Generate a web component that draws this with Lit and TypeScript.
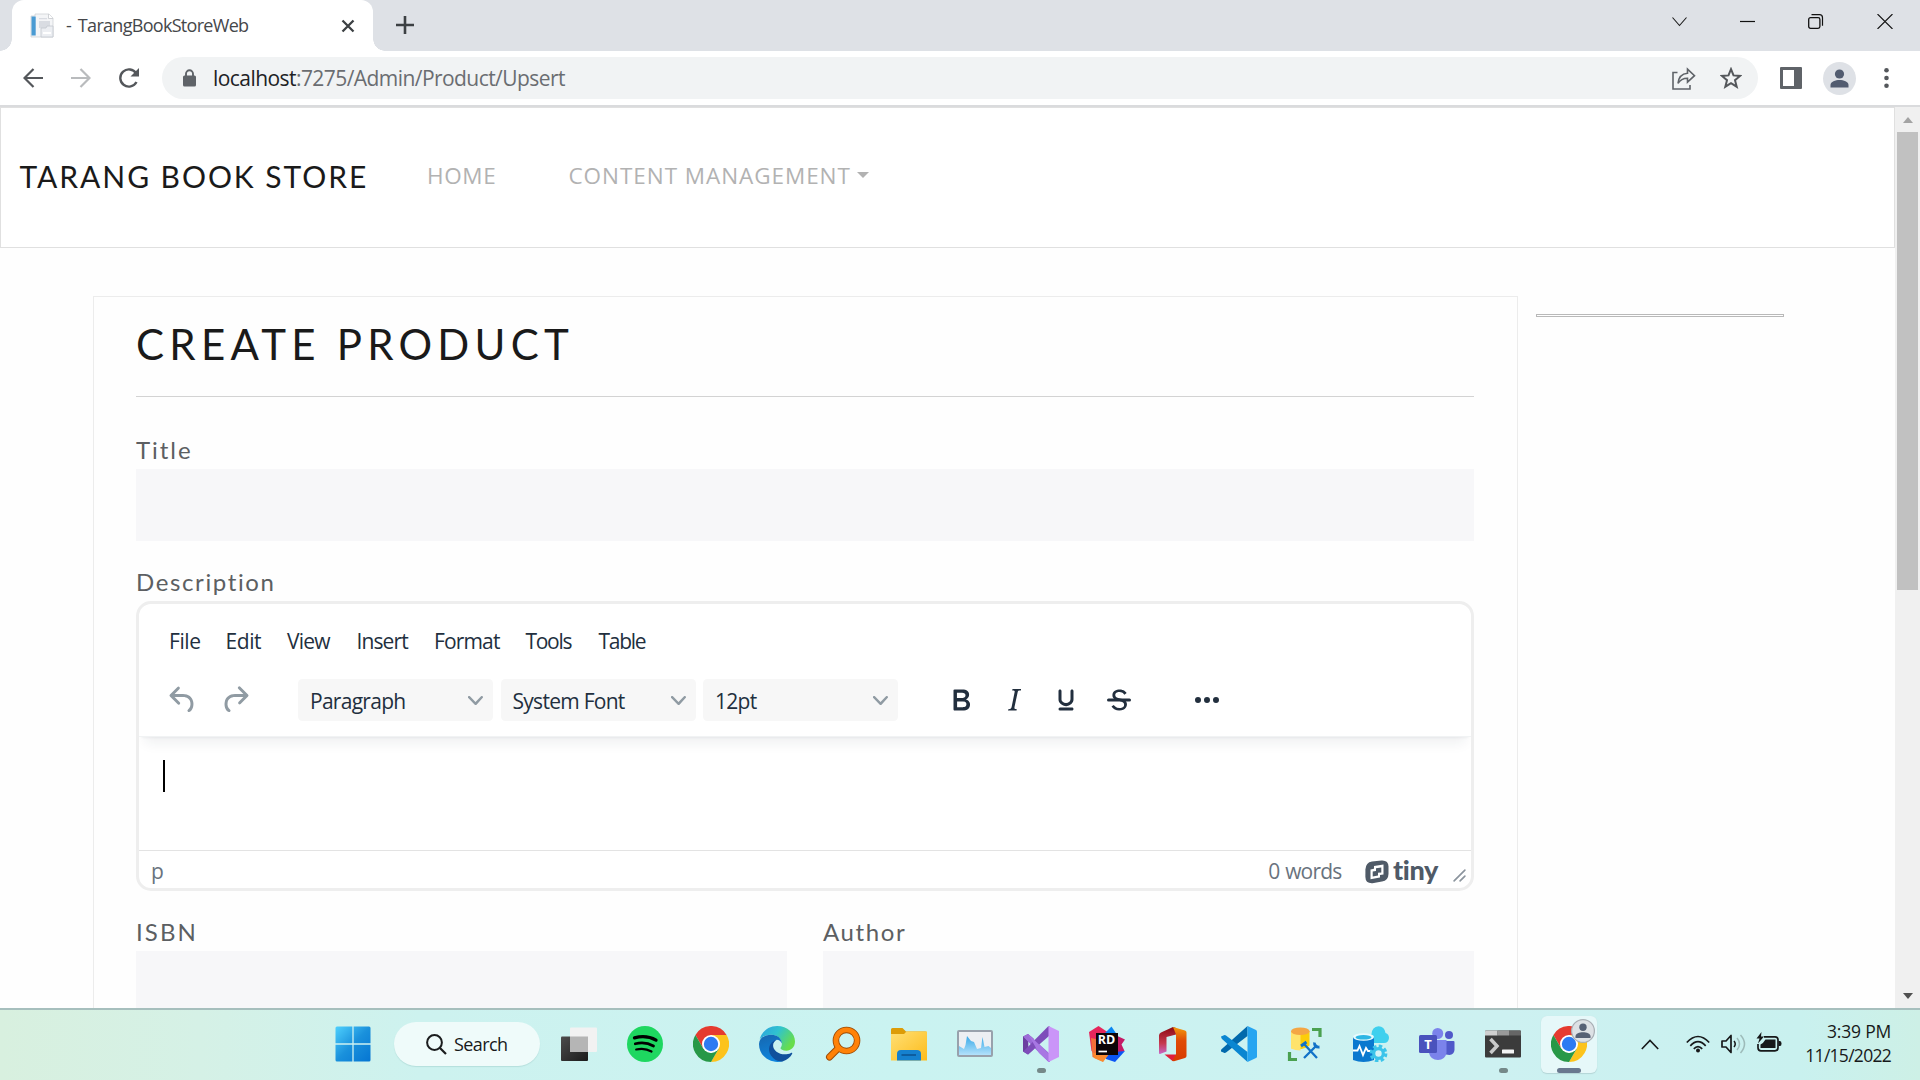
import { LitElement, html, svg, css } from "lit";
import { customElement } from "lit/decorators.js";

interface MenuEntry {
  label: string;
  spacing: number;
}

const MENU: MenuEntry[] = [
  { label: "File", spacing: -0.4 },
  { label: "Edit", spacing: -0.4 },
  { label: "View", spacing: -0.8 },
  { label: "Insert", spacing: -0.9 },
  { label: "Format", spacing: -0.85 },
  { label: "Tools", spacing: -1.3 },
  { label: "Table", spacing: -1.3 },
];

const SELECTS = ["Paragraph", "System Font", "12pt"];

const UNDO = "M6.4 8H12c3.7 0 6.2 2 6.8 5.1.6 2.7-.4 5.6-2.3 6.8a1 1 0 0 1-1-1.8c1.1-.6 1.8-2.7 1.4-4.6-.5-2.1-2.1-3.5-4.9-3.5H6.4l3.3 3.3a1 1 0 1 1-1.4 1.4l-5-5a1 1 0 0 1 0-1.4l5-5a1 1 0 0 1 1.4 1.4L6.4 8Z";
const REDO = "M17.6 10H12c-2.8 0-4.4 1.4-4.9 3.5-.4 2 .3 4 1.4 4.6a1 1 0 1 1-1 1.8c-2-1.2-2.9-4.1-2.3-6.8.6-3 3-5.1 6.8-5.1h5.6l-3.3-3.3a1 1 0 1 1 1.4-1.4l5 5a1 1 0 0 1 0 1.4l-5 5a1 1 0 0 1-1.4-1.4l3.3-3.3Z";
const BOLD = "M7.8 19c-.3 0-.5 0-.6-.2l-.2-.5V5.7c0-.2 0-.4.2-.5l.6-.2h5c1.5 0 2.7.3 3.5 1 .7.6 1.1 1.4 1.1 2.5a3 3 0 0 1-.6 1.9c-.4.6-1 1-1.6 1.2.4.1.9.3 1.3.6s.8.7 1 1.2c.4.4.5 1 .5 1.6 0 1.3-.4 2.3-1.3 3-.8.7-2.1 1-3.8 1H7.8Zm5-8.3c.6 0 1.2-.1 1.6-.5.4-.3.6-.7.6-1.3 0-1.1-.8-1.7-2.3-1.7H9.3v3.5h3.4Zm.5 6c.7 0 1.3-.1 1.7-.4.4-.4.6-.9.6-1.5s-.2-1-.7-1.4c-.4-.3-1-.4-2-.4H9.4v3.8h4Z";
const ITALIC = "m16.7 4.7-.1.9h-.3c-.6 0-1 0-1.4.3-.3.3-.4.6-.5 1.1l-2.1 9.8v.6c0 .5.4.8 1.4.8h.2l-.2.8H8l.2-.8h.2c1.1 0 1.8-.5 2-1.5l2-9.8.1-.5c0-.6-.4-.8-1.4-.8h-.3l.2-.9h5.8Z";
const UNDERLINE = "M16 5c.6 0 1 .4 1 1v5.5a4 4 0 0 1-.4 1.8l-1 1.4a5.3 5.3 0 0 1-5.5 1 5 5 0 0 1-1.6-1c-.5-.4-.8-.9-1.1-1.4a4 4 0 0 1-.4-1.8V6c0-.6.4-1 1-1s1 .4 1 1v5.5c0 .3 0 .6.2 1l.6.7a3.3 3.3 0 0 0 2.2.8 3.4 3.4 0 0 0 2.2-.8c.3-.2.4-.5.6-.8l.2-.9V6c0-.6.4-1 1-1ZM8 17h8c.6 0 1 .4 1 1s-.4 1-1 1H8a1 1 0 0 1 0-2Z";
const STRIKE = "M15.6 8.5c-.5-.7-1-1.1-1.3-1.3-.6-.4-1.3-.6-2-.6-2.7 0-2.8 1.7-2.8 2.1 0 1.6 1.8 2 3.2 2.3 4.4.9 4.6 2.8 4.6 3.9 0 1.4-.7 4.1-5 4.1A6.2 6.2 0 0 1 7 16.4l1.5-1.1c.4.6 1.6 2 3.7 2 1.6 0 2.5-.4 3-1.2.4-.8.3-2-.8-2.6-.7-.4-1.6-.7-2.9-1-1-.2-3.9-.8-3.9-3.6C7.6 6 10.3 5 12.4 5c2.9 0 4.2 1.6 4.7 2.4l-1.5 1.1Z";
const STRIKE_BAR = "M5 11h14a1 1 0 0 1 0 2H5a1 1 0 0 1 0-2Z";
const MORE = "M6 10a2 2 0 1 0 0 4 2 2 0 0 0 0-4Zm6 0a2 2 0 1 0 0 4 2 2 0 0 0 0-4Zm6 0a2 2 0 1 0 0 4 2 2 0 0 0 0-4Z";

/* ---------- browser window ---------- */

@customElement("browser-tabs")
class BrowserTabs extends LitElement {
  static styles = css`
    :host { display: flex; height: 51px; background: #dee1e6; font-family: "Open Sans", sans-serif; }
    svg { display: block; flex: none; }
    .tab {
      position: relative; display: flex; align-items: center; width: 361px; height: 51px; box-sizing: border-box;
      margin-left: 12px; padding-left: 18px; background: #fff; border-radius: 12px 12px 0 0;
    }
    .tab::before, .tab::after {
      content: ""; position: absolute; bottom: 0; width: 12px; height: 12px;
    }
    .tab::before { left: -12px; background: radial-gradient(circle at 0 0, transparent 11.5px, #fff 12px); }
    .tab::after { right: -12px; background: radial-gradient(circle at 100% 0, transparent 11.5px, #fff 12px); }
    .title { flex: 1; margin: -1px 0 0 12px; font-size: 18px; line-height: 50px; letter-spacing: -0.7px; word-spacing: 2.8px; color: #45474a; white-space: pre; }
    .close { margin-right: 18px; }
    .plus { margin: 16px 0 0 23px; }
    .controls { display: flex; margin: 14px 27px 0 auto; gap: 53px; }
  `;
  render() {
    return html`
      <div class="tab">
        <svg width="24" height="25" viewBox="0 0 24 25">
          <path d="M5 1h14l4 4v19H1V3h4Z" fill="#f4f5f7" stroke="#cfd2d6" stroke-width=".8" />
          <rect x="1.5" y="3.5" width="4.2" height="19" fill="#4a9bd3" />
          <path d="M9 5h8v1.2H9zM9 8h11v7H9z" fill="#d9dce2" />
          <path d="M18.5 1v4.5H23" fill="#fff" stroke="#c5c8cd" stroke-width=".8" />
          <path d="M11 15h5l1-2h6v11H11z" fill="#eceef2" stroke="#c3c6ce" stroke-width=".8" />
          <path d="M13 19h8v2h-8z" fill="#fff" />
        </svg>
        <span class="title">- TarangBookStoreWeb</span>
        <svg class="close" width="14" height="14" viewBox="0 0 14 14"><path d="M1.5 1.5l11 11M12.500 1.500l-11 11" stroke="#3c4043" stroke-width="2.300" /></svg>
      </div>
      <svg class="plus" width="18" height="18" viewBox="0 0 18 18"><path d="M9 0v18M0 9h18" stroke="#3c4043" stroke-width="2.600" /></svg>
      <div class="controls">
        <svg width="15" height="15" viewBox="0 0 15 15"><path d="M.5 3.500l7 8 7-8" fill="none" stroke="#1b1b1b" stroke-width="1.100" /></svg>
        <svg width="15" height="15" viewBox="0 0 15 15"><path d="M0 7.500h15" stroke="#111" stroke-width="1.200" /></svg>
        <svg width="16" height="15" viewBox="0 0 16 15"><rect x=".7" y="3.700" width="11.200" height="10.600" rx="1.800" fill="none" stroke="#111" stroke-width="1.300" /><path d="M3.500 .7h8q3 0 3 3v8" fill="none" stroke="#111" stroke-width="1.200" /></svg>
        <svg width="16" height="15" viewBox="0 0 16 15"><path d="M.5 0l15 15M15.500 0l-15 15" stroke="#111" stroke-width="1.100" /></svg>
      </div>
    `;
  }
}

@customElement("address-row")
class AddressRow extends LitElement {
  static styles = css`
    :host {
      display: flex; align-items: center; box-sizing: border-box; height: 56px; padding: 0 31px 0 23px;
      background: #fff; border-bottom: 2px solid #dadbdd; font-family: "Open Sans", sans-serif;
    }
    svg { display: block; flex: none; }
    .forward { margin-left: 28px; }
    .reload { margin-left: 27px; }
    .bar {
      display: flex; align-items: center; flex: 1; height: 42px; box-sizing: border-box;
      margin-left: 22px; padding: 0 16px 0 21px; border-radius: 21px; background: #f1f3f4;
    }
    .url { flex: 1; margin-left: 17px; font-size: 21px; line-height: 42px; letter-spacing: -0.56px; color: #6a6d71; }
    .host { color: #202124; }
    .star { margin-left: 24px; }
    .panel { margin-left: 22px; }
    .avatar { margin-left: 21px; }
    .dots { margin-left: 28px; }
  `;
  render() {
    return html`
      <svg width="20" height="20" viewBox="0 0 20 20"><path d="M20 10H2M10.500 1L1.500 10l9 9" fill="none" stroke="#54575b" stroke-width="2.200" /></svg>
      <svg class="forward" width="20" height="20" viewBox="0 0 20 20"><path d="M0 10h18M9.500 1l9 9-9 9" fill="none" stroke="#b9bbbd" stroke-width="2.200" /></svg>
      <svg class="reload" width="22" height="22" viewBox="0 0 22 22"><path d="M18.500 15a8.600 8.600 0 1 1-.3-8.500" fill="none" stroke="#54575b" stroke-width="2.400" /><path d="M21 1v8.500h-8.500Z" fill="#54575b" /></svg>
      <div class="bar">
        <svg width="13" height="18" viewBox="0 0 13 18"><rect y="6.500" width="13" height="11" rx="1.500" fill="#5f6368" /><path d="M3 7.500V4.800a3.500 3.500 0 0 1 7 0v2.700" fill="none" stroke="#5f6368" stroke-width="1.900" /></svg>
        <span class="url"><span class="host">localhost</span>:7275/Admin/Product/Upsert</span>
        <svg width="24" height="23" viewBox="0 0 24 23"><path d="M5.500 5.500H1v16.500h17v-4" fill="none" stroke="#5f6368" stroke-width="1.600" /><path d="M15.500 2.200l7 6.500-7 6.500v-4c-4.800 0-7.500 1.700-9.500 5.200C6.500 11 9.500 6.700 15.500 6.200Z" fill="none" stroke="#5f6368" stroke-width="1.600" /></svg>
        <svg class="star" width="22" height="22" viewBox="0 0 22 22"><path d="M11 2.200l2.500 6.200 6.600.5-5.100 4.300 1.700 6.500L11 16.100l-5.700 3.600L7 13.200 1.900 8.900l6.600-.5Z" fill="none" stroke="#54575b" stroke-width="2" /></svg>
      </div>
      <svg class="panel" width="22" height="22" viewBox="0 0 22 22"><rect width="22" height="22" rx="1" fill="#5f6368" /><rect x="3" y="3" width="11" height="16" fill="#fff" /></svg>
      <svg class="avatar" width="33" height="33" viewBox="0 0 33 33"><circle cx="16.500" cy="16.500" r="16.500" fill="#dee1e6" /><circle cx="16.500" cy="12" r="4.600" fill="#525c70" /><path d="M7.500 25.500v-2.500c0-3.300 5-5 9-5s9 1.700 9 5v2.500Z" fill="#525c70" /></svg>
      <svg class="dots" width="5" height="22" viewBox="0 0 5 22"><g fill="#54575b"><circle cx="2.500" cy="3.300" r="2.300" /><circle cx="2.500" cy="11" r="2.300" /><circle cx="2.500" cy="18.700" r="2.300" /></g></svg>
    `;
  }
}

/* ---------- site ---------- */

@customElement("site-nav")
class SiteNav extends LitElement {
  static styles = css`
    :host {
      display: flex; align-items: center; box-sizing: border-box; height: 141px; padding: 0 0 3px 18.500px;
      border: 1px solid #e0e0e0; background: #fff; font-family: Lato, sans-serif; white-space: nowrap;
    }
    .brand { width: 407.500px; padding-bottom: 1px; font-size: 30px; line-height: 40px; letter-spacing: 1.940px; color: #1a1a1a; }
    .link { font: 22.500px/40px "Open Sans", sans-serif; letter-spacing: 0.950px; color: #b2b2b2; }
    .home { width: 141.500px; letter-spacing: 0.600px; }
    .caret { margin: -2px 0 0 6.500px; border: 6px solid transparent; border-top-color: #b2b2b2; border-bottom: 0; }
  `;
  render() {
    return html`
      <span class="brand">TARANG BOOK STORE</span>
      <span class="link home">HOME</span>
      <span class="link">CONTENT MANAGEMENT</span>
      <span class="caret"></span>
    `;
  }
}

@customElement("rich-editor")
class RichEditor extends LitElement {
  static styles = css`
    :host {
      display: flex; flex-direction: column; box-sizing: border-box; height: 290px; overflow: hidden;
      border: 3px solid #eee; border-radius: 15px; background: #fff;
      font: 21px "Open Sans", sans-serif; color: #222f3e;
    }
    svg { display: block; flex: none; }
    .header {
      box-sizing: border-box; height: 133px; padding-top: 13px; border-bottom: 1px solid #f1f3f4;
      box-shadow: 0 3px 3px -3px rgba(34, 47, 62, 0.1), 0 12px 12px -6px rgba(34, 47, 62, 0.07);
    }
    .menu {
      display: grid; grid-template-columns: 56.500px 61.500px 69.500px 77.500px 91.500px 73px 60px;
      padding: 1px 0 0 30px; line-height: 46px;
    }
    .tools { display: flex; align-items: center; height: 72px; padding-left: 26px; }
    .muted { fill: #909ba3; }
    .redo { margin-left: 15.500px; }
    .select {
      display: flex; align-items: center; justify-content: space-between; box-sizing: border-box;
      width: 195px; height: 42px; margin-right: 7.500px; padding: 0 10px 0 12px; border-radius: 4.500px;
      background: #f7f7f7; letter-spacing: -0.720px; line-height: 42px;
    }
    .select span { padding-top: 2px; }
    .selects { display: flex; margin-left: 45.500px; }
    .bold { margin-left: 37px; }
    .italic { margin-left: 17.500px; }
    .underline { margin-left: 15.500px; }
    .strike { margin-left: 17.500px; }
    .more { margin-left: 52px; }
    .ink { fill: #222f3e; }
    .body { flex: 1; padding: 23px 0 0 24px; }
    .cursor { width: 2px; height: 32px; background: #000; }
    .status {
      display: flex; box-sizing: border-box; height: 38px; padding: 0 4px 0 12px; border-top: 1px solid #e3e3e3;
      line-height: 41px; color: #69737e;
    }
    .words { margin-left: auto; letter-spacing: -0.800px; word-spacing: 1px; }
    .logo { margin: 9px 0 0 23.500px; }
    .tiny { width: 59px; margin-left: 4px; font: 900 27px/38px Lato, sans-serif; letter-spacing: -0.400px; color: #4f5a67; }
    .resize { margin-top: 17px; }
  `;
  private tool(name: string, ...paths: string[]) {
    return html`<svg class=${name} width="36" height="36" viewBox="0 0 24 24">${paths.map((d) => svg`<path fill-rule="evenodd" d=${d} />`)}</svg>`;
  }
  render() {
    return html`
      <div class="header">
        <div class="menu">
          ${MENU.map((m) => html`<span style="letter-spacing:${m.spacing}px">${m.label}</span>`)}
        </div>
        <div class="tools">
          ${this.tool("muted", UNDO)} ${this.tool("muted redo", REDO)}
          <div class="selects">
            ${SELECTS.map(
              (s) => html`<div class="select">
                <span>${s}</span>
                <svg width="15" height="15" viewBox="0 0 10 10"><path class="muted" d="M8.700 2.200c.3-.3.8-.3 1 0 .4.4.4.9 0 1.200L5.700 7.800c-.3.3-.9.3-1.200 0L.2 3.400a.8.8 0 0 1 0-1.200c.3-.3.8-.3 1.100 0L5 6l3.700-3.800Z" /></svg>
              </div>`
            )}
          </div>
          ${this.tool("ink bold", BOLD)} ${this.tool("ink italic", ITALIC)} ${this.tool("ink underline", UNDERLINE)}
          ${this.tool("ink strike", STRIKE, STRIKE_BAR)} ${this.tool("ink more", MORE)}
        </div>
      </div>
      <div class="body"><div class="cursor"></div></div>
      <div class="status">
        <span>p</span>
        <span class="words">0 words</span>
        <svg class="logo" width="24" height="24" viewBox="0 0 24 24">
          <path d="M7 1.600L16.500 .4Q23.500 0 23.500 6.500V14Q23.300 20.500 17 21.600L7.500 23.200Q.5 23.600 .4 17V9.500Q.8 2.600 7 1.600Z" fill="#4f5a67" />
          <path d="M5.500 9.400L9 8.800V6.100L18.500 4.600V14.400L15 15V17.600L5.500 19.200Z" fill="#fff" />
          <path d="M11 8.300L16.300 7.400V12.400L13 13V15.500L7.700 16.400V11.400L11 10.900Z" fill="#4f5a67" />
          <path d="M8.800 8.800H11V11H8.800zM13 12.800h2.200V15H13z" fill="#fff" />
        </svg>
        <span class="tiny">tiny</span>
        <svg class="resize" width="15" height="15" viewBox="0 0 10 10"><path d="M1.400 8.600l7.200-7.200M5.400 8.600l3.200-3.200" stroke="#8b949d" stroke-width="1.100" stroke-linecap="round" /></svg>
      </div>
    `;
  }
}

@customElement("product-page")
class ProductPage extends LitElement {
  static styles = css`
    :host { display: block; flex: 1; min-width: 0; background: #fefefe; font-family: Lato, sans-serif; }
    .columns { display: flex; gap: 18px; margin: 48px 0 0 93px; }
    .card { box-sizing: border-box; width: 1425px; height: 800px; padding: 21px 43px 0 42px; border: 1px solid #ececec; }
    .heading { margin: 0; font-size: 42px; line-height: 52px; font-weight: 400; letter-spacing: 5.260px; color: #1a1a1a; white-space: nowrap; }
    .rule { height: 1px; margin: 26px 0 35px; background: #d3d3d3; }
    .label { display: block; font-size: 24px; line-height: 36px; margin-bottom: 1px; letter-spacing: 1.620px; color: #5c5f62; }
    .input { height: 72px; margin-bottom: 23px; background: #f7f7f9; }
    .pair { display: grid; grid-template-columns: 651px 651px; justify-content: space-between; margin-top: 23px; }
    .first { letter-spacing: 1.950px; }
    .wide { letter-spacing: 2.100px; }
    .aside { box-sizing: border-box; width: 248px; height: 3px; margin-top: 18px; border: 1px solid #b9b9b9; background: #fff; }
  `;
  render() {
    return html`
      <site-nav></site-nav>
      <div class="columns">
        <div class="card">
          <h2 class="heading">CREATE PRODUCT</h2>
          <div class="rule"></div>
          <span class="label first">Title</span>
          <div class="input"></div>
          <span class="label">Description</span>
          <rich-editor></rich-editor>
          <div class="pair">
            <div><span class="label wide">ISBN</span><div class="input"></div></div>
            <div><span class="label">Author</span><div class="input"></div></div>
          </div>
        </div>
        <div class="aside"></div>
      </div>
    `;
  }
}

@customElement("scroll-rail")
class ScrollRail extends LitElement {
  static styles = css`
    :host { display: flex; flex-direction: column; align-items: center; width: 25px; box-sizing: border-box; background: #f0f0f0; }
    .up { margin-top: 10px; border: 5.500px solid transparent; border-bottom: 6px solid #a3a3a3; border-top: 0; }
    .thumb { width: 21px; height: 458px; margin-top: 9px; background: #c1c1c1; }
    .down { margin: auto 0 9px; border: 5.500px solid transparent; border-top: 6px solid #505050; border-bottom: 0; }
  `;
  render() {
    return html`<div class="up"></div><div class="thumb"></div><div class="down"></div>`;
  }
}

/* ---------- taskbar ---------- */

const windowsIcon = svg`
  <defs><linearGradient id="win" x1="0" y1="0" x2="1" y2="1"><stop offset="0" stop-color="#4fd0fd"/><stop offset=".5" stop-color="#1a91dc"/><stop offset="1" stop-color="#0575d2"/></linearGradient></defs>
  <rect x=".5" y=".5" width="35" height="35" rx="1.500" fill="url(#win)"/><path d="M18 0v36M0 18h36" stroke="#cdf1f1" stroke-width="1.300"/>`;

const taskViewIcon = svg`
  <defs><linearGradient id="tv" x1="0" y1="0" x2="1" y2="1"><stop offset="0" stop-color="#4c4c4c"/><stop offset="1" stop-color="#1b1b1b"/></linearGradient></defs>
  <rect y="10.500" width="27" height="24.500" rx="1" fill="url(#tv)"/><rect x="9" y="1.500" width="27" height="24.500" rx="1" fill="#f2f2f2"/><path d="M9 10.500h18V26H9Z" fill="#b5b5b5"/>`;

const spotifyIcon = svg`
  <circle cx="18" cy="18" r="18" fill="#1ed760"/>
  <g fill="none" stroke="#000" stroke-linecap="round"><path d="M7.500 11.800q12-3.200 21.500 2.300" stroke-width="3.300"/><path d="M8.300 17.800q9.800-2.600 18.200 2.200" stroke-width="2.700"/><path d="M9.200 23.500q8.300-2.100 15.300 2" stroke-width="2.200"/></g>`;

const chromeIcon = svg`
  <path d="M2.400 9A18 18 0 0 1 33.600 9H18l-7.800 13.500Z" fill="#e53b2f"/>
  <path d="M33.600 9A18 18 0 0 1 18 36l7.800-13.500L18 9Z" fill="#fcc31c"/>
  <path d="M18 36A18 18 0 0 1 2.400 9l7.800 13.500L18 27l7.800-4.500Z" fill="#279847"/>
  <circle cx="18" cy="18" r="9" fill="#fff"/><circle cx="18" cy="18" r="7.200" fill="#2c7bf2"/>`;

const edgeIcon = svg`
  <defs>
    <linearGradient id="e1" x1="0" y1="0" x2="1" y2=".5"><stop offset="0" stop-color="#2a9fe0"/><stop offset=".5" stop-color="#30c3cf"/><stop offset="1" stop-color="#67dd4c"/></linearGradient>
    <linearGradient id="e2" x1="0" y1="0" x2=".3" y2="1"><stop offset="0" stop-color="#1666ae"/><stop offset="1" stop-color="#0f84dc"/></linearGradient>
  </defs>
  <path d="M.6 13.500C3 5 10 0 18 0c10.500 0 18 7.200 18 15.500 0 5.800-4.300 9.200-8.500 9.200-3.800 0-6-1.300-6-2.400 0-1 1.400-1.700 1.400-4.500C22.900 12.500 18 8.700 12.500 8.700 7 8.700 2.800 10.800.6 13.500Z" fill="url(#e1)"/>
  <path d="M0 18C.3 12 5.500 8.700 12.500 8.700c6 0 10.400 4 10.400 8.800-1-2.500-2.800-3.800-5.200-3.800-5.200 2.500-7 8-3.700 14 2.200 4.500 6.500 7.300 10.500 7.200C14 38.500 0 32 0 18Z" fill="url(#e2)"/>
  <path d="M17.700 13.700C10 16 8 23.500 12 29.500c3 4.700 8 6.500 12 5.700 4-1.300 7.500-4 9.200-7.500.3-.8-.5-1.200-1.200-.8-8 4-18.300-1-17.900-7.700.1-2.300 1.300-4.200 3.600-5.500Z" fill="#10509c"/>`;

const everythingIcon = svg`
  <g fill="none" stroke-linecap="round"><path d="M13.500 22L4.500 31" stroke="#9b4a05" stroke-width="7"/><circle cx="21.500" cy="14.500" r="10.600" stroke="#9b4a05" stroke-width="6.500"/>
  <path d="M13.500 22L4.500 31" stroke="#ff8208" stroke-width="5.200"/><circle cx="21.500" cy="14.500" r="10.600" stroke="#ff8208" stroke-width="4.800"/></g>`;

const folderIcon = svg`
  <defs><linearGradient id="fo" x1="0" y1="0" x2="1" y2="1"><stop offset="0" stop-color="#ffdf75"/><stop offset="1" stop-color="#fdbc1a"/></linearGradient></defs>
  <path d="M0 3.500Q0 2 1.500 2h10l3.500 3.500h19.500Q36 5.500 36 7v4H0Z" fill="#dd9c08"/><path d="M0 8h13l2.500-2.500H36V34.500H0Z" fill="url(#fo)"/>
  <path d="M6 34.500V28q0-4 4-4h16q4 0 4 4v6.500Z" fill="#1581cf"/><path d="M10.500 29h14.500" stroke="#0c5594" stroke-width="1.600"/>`;

const perfIcon = svg`
  <defs><linearGradient id="pm" x1="0" y1="0" x2="0" y2="1"><stop offset="0" stop-color="#38a9e8"/><stop offset="1" stop-color="#b3e1fb"/></linearGradient></defs>
  <rect x="1" y="5" width="34" height="25" rx="1" fill="#eceff3" stroke="#98a1ac" stroke-width="2"/>
  <path d="M2 20l5 3 1.500-4L10 10l4 5 3 1 3 7 4-1 1.500-11L27.500 21l4-1 2.500 2v7H2Z" fill="url(#pm)"/>`;

const vsIcon = svg`
  <path d="M0 10.500L5 8l5.500 4.500V23.500L5 28.500.0 25.500Z" fill="#6b3fa0"/><path d="M5.300 14.500v7L9 18Z" fill="#cdf1f1"/>
  <path d="M5 8.200L25.500 31 26 36 .5 10.500Z" fill="#a574df"/><path d="M.3 10.800L5 8l22 20v8h-1.500Z" fill="#9c6bd8"/>
  <path d="M.3 25.500L5 28.500 26.500 9.500V0L25 .4Z" fill="#7e4dba"/><path d="M5 8l21 20v8L16 27Z" fill="#a877e3"/>
  <path d="M25.500 0L36 5v26L25.500 36Z" fill="#ca95f8"/>`;

const riderIcon = svg`
  <path d="M0 6L9.500 0 20 7 10 30 2.500 25Z" fill="#e6265c"/><path d="M2 12l9 2-2 17 6 5L3.500 31Z" fill="#f2703a"/>
  <path d="M16 7L22.500.5 27.500 8Z" fill="#0b86f2"/><path d="M24 8l12 5.500-3.500 5L35.500 25 25 29Z" fill="#c51b66"/><path d="M15 27L36 25 26 36l-9-3Z" fill="#0a55f5"/><path d="M4 27h17l-7 9-9-4Z" fill="#fb8a2e"/>
  <rect x="7" y="7" width="22" height="22" fill="#0d0508"/>
  <text x="8.700" y="18" font-family="Open Sans, sans-serif" font-weight="700" font-size="11.500" textLength="17.500" lengthAdjust="spacingAndGlyphs" fill="#fff">RD</text>
  <path d="M9.500 25.500h8.500" stroke="#fff" stroke-width="1.700"/>`;

const officeIcon = svg`
  <defs><linearGradient id="o1" x1="0" y1="0" x2="0" y2="1"><stop offset="0" stop-color="#8c0a12"/><stop offset=".6" stop-color="#c53a4e"/><stop offset="1" stop-color="#c968c8"/></linearGradient>
  <linearGradient id="o2" x1="0" y1="0" x2="0" y2="1"><stop offset="0" stop-color="#f39a0c"/><stop offset=".4" stop-color="#e04b05"/><stop offset="1" stop-color="#d83b01"/></linearGradient></defs>
  <path d="M4 9.500Q4 7.500 6 6.500L18 1l3 1v6.500L11.500 11v14.500L5 28q-1 .2-1-1Z" fill="url(#o1)"/><path d="M9.500 28.500H21v5L17.500 35Z" fill="#e01f3b"/><path d="M18 1l12 3.500q1.500.5 1.500 2V30q0 1.500-1.500 2l-11 3.200-2-.2 4-6.500V8.500Z" fill="url(#o2)"/>`;

const vscodeIcon = svg`
  <path d="M0 25.500q-.3-1.500.8-2.500L26.500 0v10L5 26.500q-1 .8-2 .2Z" fill="#0269ac"/>
  <path d="M0 10.500q.3 1.500 1 2.500L26.500 36V26L5 9.500q-1-.8-2-.2Z" fill="#0a86d1"/>
  <path d="M26.500 0L35 4q1 .5 1 1.500v25q0 1-1 1.500L26.500 36Z" fill="#27a5f1"/>`;

const sqlToolsIcon = svg`
  <path d="M4 5.500h18.500v14q-8 6-18.500 2.500Z" fill="#fccd09"/><path d="M4 5.500h9.500V24.500Q8 24.500 4 22.500Z" fill="#ffe36b"/><ellipse cx="13.300" cy="5.300" rx="9.300" ry="3.800" fill="#f4a644"/>
  <path d="M25 3.500h8V11M2.500 26v7.500H10" fill="none" stroke="#4aa150" stroke-width="3.200"/>
  <path d="M17.500 18.500L30 32M30 19L17 32" stroke="#1272c8" stroke-width="2.300"/><path d="M14 20l5.500-4M27.500 16.500q-.5 5 5 4.500" fill="none" stroke="#1272c8" stroke-width="2.800"/>`;

const azureDataIcon = svg`
  <path d="M15 17q-2.500-7 3.500-9Q19 1 25.500.3 31.500.5 32.500 7q3.500 1 3.500 5-.5 5-5 5Z" fill="#3fd0ee"/>
  <path d="M0 11h21v23q-10.500 4-21 0Z" fill="#0a78cf"/><ellipse cx="10.500" cy="11" rx="10.500" ry="3.800" fill="#e8fbfd"/><ellipse cx="10.500" cy="11.300" rx="8" ry="2.300" fill="#2db6e4"/>
  <path d="M0 24.500h4.500l2-4.500 3.500 9 3-7 2 3h3" fill="none" stroke="#fff" stroke-width="1.800"/>
  <circle cx="25.500" cy="27.500" r="7" fill="none" stroke="#3cc4ea" stroke-width="3.800" stroke-dasharray="3.300 2.200"/><circle cx="25.500" cy="27.500" r="4.800" fill="#d5f3f6" stroke="#3cc4ea" stroke-width="3.200"/>`;

const teamsIcon = svg`
  <circle cx="18.700" cy="7.500" r="5.500" fill="#7b83eb"/><circle cx="30" cy="9" r="4" fill="#5059c9"/>
  <path d="M25 15h9.500q1 0 1 1v8q-.5 4.500-5 5-4 0-6-2Z" fill="#5059c9"/><path d="M10 14h17.500v13q-1.500 7-8.500 7-7.500 0-9-7Z" fill="#7b83eb"/>
  <rect y="9" width="18" height="18" rx="1.500" fill="#4a52bd"/>
  <text x="9" y="22.500" text-anchor="middle" font-family="Open Sans, sans-serif" font-weight="700" font-size="13" fill="#fff">T</text>`;

const terminalIcon = svg`
  <rect y="4.500" width="36" height="27" rx="1" fill="#3b3b3b"/><path d="M0 9.500V5.500q0-1 1-1h11.500v5Z" fill="#cfcfcf"/><path d="M12.500 4.500H24v5H12.500Z" fill="#999"/><path d="M24 4.500h11q1 0 1 1v4H24Z" fill="#666"/>
  <path d="M5.500 13l6.500 7-6.500 7" fill="none" stroke="#c9c9c9" stroke-width="3.500"/><rect x="17" y="23.500" width="12" height="4" rx=".6" fill="#f3f3f3"/>`;

const APPS = [
  { art: taskViewIcon, open: false }, { art: spotifyIcon, open: false }, { art: chromeIcon, open: false },
  { art: edgeIcon, open: false }, { art: everythingIcon, open: false }, { art: folderIcon, open: false },
  { art: perfIcon, open: false }, { art: vsIcon, open: true }, { art: riderIcon, open: false },
  { art: officeIcon, open: false }, { art: vscodeIcon, open: false }, { art: sqlToolsIcon, open: false },
  { art: azureDataIcon, open: false }, { art: teamsIcon, open: false }, { art: terminalIcon, open: true },
];

@customElement("task-bar")
class TaskBar extends LitElement {
  static styles = css`
    :host {
      display: flex; align-items: center; box-sizing: border-box; height: 72px; border-top: 2px solid #a6bfbd;
      padding: 0 0 2px 335px; font-family: "Open Sans", sans-serif; color: #17191a;
      background: linear-gradient(90deg, #d8f0df 0, #d5f1e6 200px, #cdf2ef 420px, #caf3f1 900px, #cdf1f1 1500px, #c9f1ef 1800px, #cdf0e6 1920px);
    }
    svg { display: block; flex: none; }
    .search {
      display: flex; align-items: center; box-sizing: border-box; width: 146px; height: 44px; margin-left: 23px; padding-left: 32px;
      border-radius: 22px; background: #effbfa; box-shadow: 0 1px 1px #b5dfdc; font-size: 18px; letter-spacing: -0.590px; line-height: 43px;
    }
    .search svg { margin-right: 7px; }
    .apps { display: flex; margin-left: 6px; }
    .slot { position: relative; display: flex; align-items: center; justify-content: center; width: 66px; height: 68px; }
    .open::after {
      content: ""; position: absolute; left: 28.500px; bottom: 5px; width: 9px; height: 5px; border-radius: 3px; background: #758989;
    }
    .tile { display: flex; align-items: center; justify-content: center; width: 56px; height: 57px; border-radius: 6px; background: #e6f8f9; box-shadow: 0 1px 1px #b4d5d6, 0 0 1px #c4e3e3; }
    .active::after {
      content: ""; position: absolute; left: 21px; bottom: 5px; width: 24px; height: 5px; border-radius: 3px; background: #68788f;
    }
    .badge { position: absolute; left: 35px; top: 9px; }
    .tray { display: flex; align-items: center; margin-left: 39px; }
    .wifi { margin-left: 27px; }
    .volume { margin-left: 11px; }
    .battery { margin: -2px 0 0 10px; }
    .clock { display: flex; flex-direction: column; align-items: flex-end; margin: -2px 29px 0 auto; font-size: 17.500px; line-height: 24px; letter-spacing: -0.200px; }
    .date { letter-spacing: -0.720px; }
  `;
  render() {
    return html`
      <svg width="36" height="36" viewBox="0 0 36 36">${windowsIcon}</svg>
      <div class="search">
        <svg width="21" height="21" viewBox="0 0 21 21"><circle cx="8.500" cy="8.500" r="7.400" fill="none" stroke="#1b1d1e" stroke-width="2" /><path d="M14 14l6 6" stroke="#1b1d1e" stroke-width="2.200" /></svg>
        <span>Search</span>
      </div>
      <div class="apps">
        ${APPS.map((a) => html`<div class="slot ${a.open ? "open" : ""}"><svg width="36" height="36" viewBox="0 0 36 36">${a.art}</svg></div>`)}
        <div class="slot active">
          <div class="tile"><svg width="36" height="36" viewBox="0 0 36 36">${chromeIcon}</svg></div>
          <svg class="badge" width="24" height="24" viewBox="0 0 24 24"><circle cx="12" cy="12" r="11.400" fill="#dde1e5" stroke="#a9afb5" stroke-width="1.200" /><circle cx="12" cy="8.300" r="3.700" fill="#566175" /><path d="M4.500 19v-1.800c0-2.700 4-4 7.500-4s7.500 1.300 7.500 4V19Z" fill="#566175" /></svg>
        </div>
      </div>
      <div class="tray">
        <svg width="18" height="11" viewBox="0 0 18 11"><path d="M.8 10L9 1.500l8.200 8.500" fill="none" stroke="#17191a" stroke-width="1.600" /></svg>
        <svg class="wifi" width="24" height="18" viewBox="0 0 24 18"><g fill="none" stroke="#17191a" stroke-width="1.700"><path d="M.8 7.500q11.200-12 22.400 0" /><path d="M4.300 10.800q7.700-8.300 15.400 0" /><path d="M7.800 13.900q4.200-4.600 8.400 0" /></g><circle cx="12" cy="15.500" r="2" fill="#17191a" /></svg>
        <svg class="volume" width="25" height="20" viewBox="0 0 25 20"><path d="M1 7h4l5-5.500v17L5 13H1Z" fill="none" stroke="#17191a" stroke-width="1.700" stroke-linejoin="round" /><path d="M13 7q2.500 3 0 6" fill="none" stroke="#17191a" stroke-width="1.500" /><path d="M16 4q5 6 0 12M19.500 1q8 9 0 18" fill="none" stroke="#9dbbb9" stroke-width="1.500" /></svg>
        <svg class="battery" width="26" height="22" viewBox="0 0 26 22"><path d="M8 4.800h11q3 0 3 3v8q0 3-3 3H5q-3 0-3-3V12" fill="none" stroke="#17191a" stroke-width="1.700" /><path d="M9.500 7.500h10v8.500h-15v-3.500q3-1.500 5-5Z" fill="#17191a" /><path d="M22.500 9h1.500q1.500 0 1.500 2.500t-1.500 2.500h-1.500Z" fill="#17191a" /><path d="M5.500 0L.5 6.500h3L2 11.500l6-7H5Z" fill="#17191a" /></svg>
      </div>
      <div class="clock"><span>3:39 PM</span><span class="date">11/15/2022</span></div>
    `;
  }
}

@customElement("app-root")
class AppRoot extends LitElement {
  static styles = css`
    :host { display: flex; flex-direction: column; width: 1920px; height: 1080px; overflow: hidden; background: #fff; }
    .view { display: flex; height: 901px; overflow: hidden; }
  `;
  render() {
    return html`
      <browser-tabs></browser-tabs>
      <address-row></address-row>
      <div class="view"><product-page></product-page><scroll-rail></scroll-rail></div>
      <task-bar></task-bar>
    `;
  }
}
